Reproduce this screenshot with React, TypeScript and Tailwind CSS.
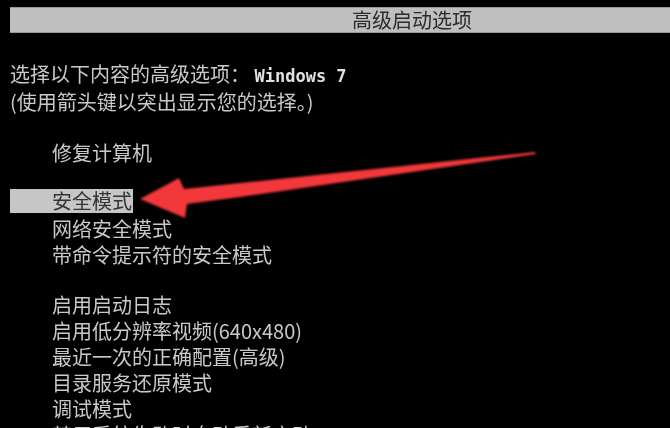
const font = "font-['Noto_Sans_CJK_SC','Noto_Sans',sans-serif]";

const groups: string[][] = [
  ["修复计算机"],
  ["安全模式", "网络安全模式", "带命令提示符的安全模式"],
  [
    "启用启动日志",
    "启用低分辨率视频(640x480)",
    "最近一次的正确配置(高级)",
    "目录服务还原模式",
    "调试模式",
    "禁用系统失败时自动重新启动",
  ],
];

function Arrow() {
  return (
    <svg
      className="absolute left-0 top-0 pointer-events-none"
      width="670"
      height="428"
      viewBox="0 0 670 428"
    >
      <defs>
        <filter id="soft" x="-5%" y="-20%" width="110%" height="140%">
          <feGaussianBlur stdDeviation="0.8" />
        </filter>
      </defs>
      <polygon
        points="140,199 179,178 184,189 535,152 536,154 240,197 187,204 185,218"
        fill="#f2383a"
        filter="url(#soft)"
      />
    </svg>
  );
}

export default function App() {
  return (
    <div className={`relative w-[670px] h-[428px] overflow-hidden bg-black ${font}`}>
      <div className="ml-[10px] mt-[7px] h-[26px] bg-[#bfbfbf] border-y border-[#9a9a9a] pl-[342px] text-[20px] leading-[24px] text-[#2b2b2b] blur-[0.3px]">
        高级启动选项
      </div>

      <div className="mt-[28px] pl-[10px] text-[20px] leading-[26px] text-[#c9c9c9] blur-[0.35px]">
        <div className="whitespace-nowrap">
          选择以下内容的高级选项：{" "}
          <span className="font-['DejaVu_Sans_Mono',monospace] text-[17px] font-bold text-[#e2e2e2]">
            Windows 7
          </span>
        </div>
        <div className="whitespace-nowrap">(使用箭头键以突出显示您的选择。)</div>
      </div>

      <div className="mt-[25px] flex flex-col gap-[24px] text-[20px] leading-[26px] text-[#c9c9c9] blur-[0.35px]">
        {groups.map((group, gi) => (
          <div key={gi} className="flex flex-col">
            {group.map((item) =>
              item === "安全模式" ? (
                <div key={item} className="ml-[10px] w-[123px] h-[24px] -mt-[1px] mb-[3px] bg-[#c6c6c6] pl-[42px] text-[#333] leading-[24px]">
                  {item}
                </div>
              ) : (
                <div key={item} className="pl-[52px] whitespace-nowrap">
                  {item}
                </div>
              )
            )}
          </div>
        ))}
      </div>

      <Arrow />
    </div>
  );
}
